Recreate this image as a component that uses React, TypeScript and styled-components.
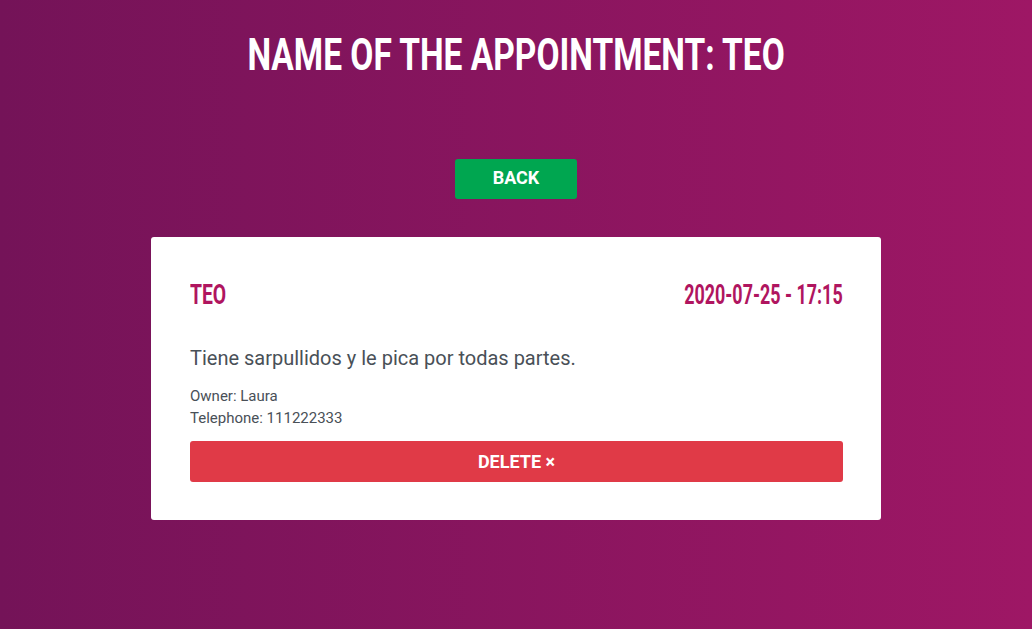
import React from "react";
import styled, { createGlobalStyle } from "styled-components";

const GlobalStyle = createGlobalStyle`
  html, body { margin: 0; padding: 0; }
  body {
    font-family: Roboto, "Liberation Sans", sans-serif;
    background: linear-gradient(to right, #741358, #9e1765);
    min-height: 629px;
  }
  * { box-sizing: border-box; }
`;

const Page = styled.div`
  min-height: 629px;
  display: flex;
  flex-direction: column;
  align-items: center;
  padding-top: 25px;
`;

const Title = styled.h1`
  margin: 0;
  color: #fff;
  font-family: Roboto, sans-serif;
  font-weight: 700;
  font-size: 45px;
  line-height: 60px;
  text-transform: uppercase;
  white-space: nowrap;
`;

const Squeeze = styled.span<{ $origin?: string; $scale: number }>`
  display: inline-block;
  transform: scaleX(${(p) => p.$scale});
  transform-origin: ${(p) => p.$origin ?? "center"};
`;

const BackButton = styled.button`
  margin-top: 74px;
  width: 122px;
  height: 40px;
  padding: 0 0 3px;
  border: none;
  border-radius: 3px;
  background: #00a650;
  color: #fff;
  font-family: Roboto, sans-serif;
  font-weight: 700;
  font-size: 18px;
  text-transform: uppercase;
  cursor: pointer;
`;

const Card = styled.div`
  margin-top: 38px;
  width: 730px;
  background: #fff;
  border-radius: 3px;
  padding: 38px 38px 38px 39px;
`;

const CardHeader = styled.div`
  display: flex;
  justify-content: space-between;
  align-items: center;
  margin-top: 5px;
`;

const CardTitle = styled.h2`
  margin: 0;
  color: #b0155f;
  font-family: Roboto, sans-serif;
  font-weight: 700;
  font-size: 28px;
  line-height: 30px;
  white-space: nowrap;
`;

const Lead = styled.p`
  margin: 34px 0 0;
  font-size: 20px;
  line-height: 28px;
  color: #495057;
  font-weight: 400;
`;

const Info = styled.p`
  margin: 0;
  font-size: 15px;
  line-height: 22px;
  color: #495057;
  &:first-of-type { margin-top: 13px; }
`;

const DeleteButton = styled.button`
  display: block;
  width: 100%;
  height: 41px;
  margin-top: 12px;
  border: none;
  border-radius: 3px;
  background: #e03a47;
  color: #fff;
  font-family: Roboto, sans-serif;
  font-weight: 700;
  font-size: 18px;
  cursor: pointer;
`;

export default function App() {
  return (
    <>
      <GlobalStyle />
      <Page>
        <Title>
          <Squeeze $scale={0.744}>Name of the appointment: Teo</Squeeze>
        </Title>
        <BackButton>Back</BackButton>
        <Card>
          <CardHeader>
            <CardTitle>
              <Squeeze $scale={0.69} $origin="left">TEO</Squeeze>
            </CardTitle>
            <CardTitle>
              <Squeeze $scale={0.64} $origin="right">2020-07-25 - 17:15</Squeeze>
            </CardTitle>
          </CardHeader>
          <Lead>Tiene sarpullidos y le pica por todas partes.</Lead>
          <div>
            <Info>Owner: Laura</Info>
            <Info>Telephone: 111222333</Info>
          </div>
          <DeleteButton>DELETE ×</DeleteButton>
        </Card>
      </Page>
    </>
  );
}
